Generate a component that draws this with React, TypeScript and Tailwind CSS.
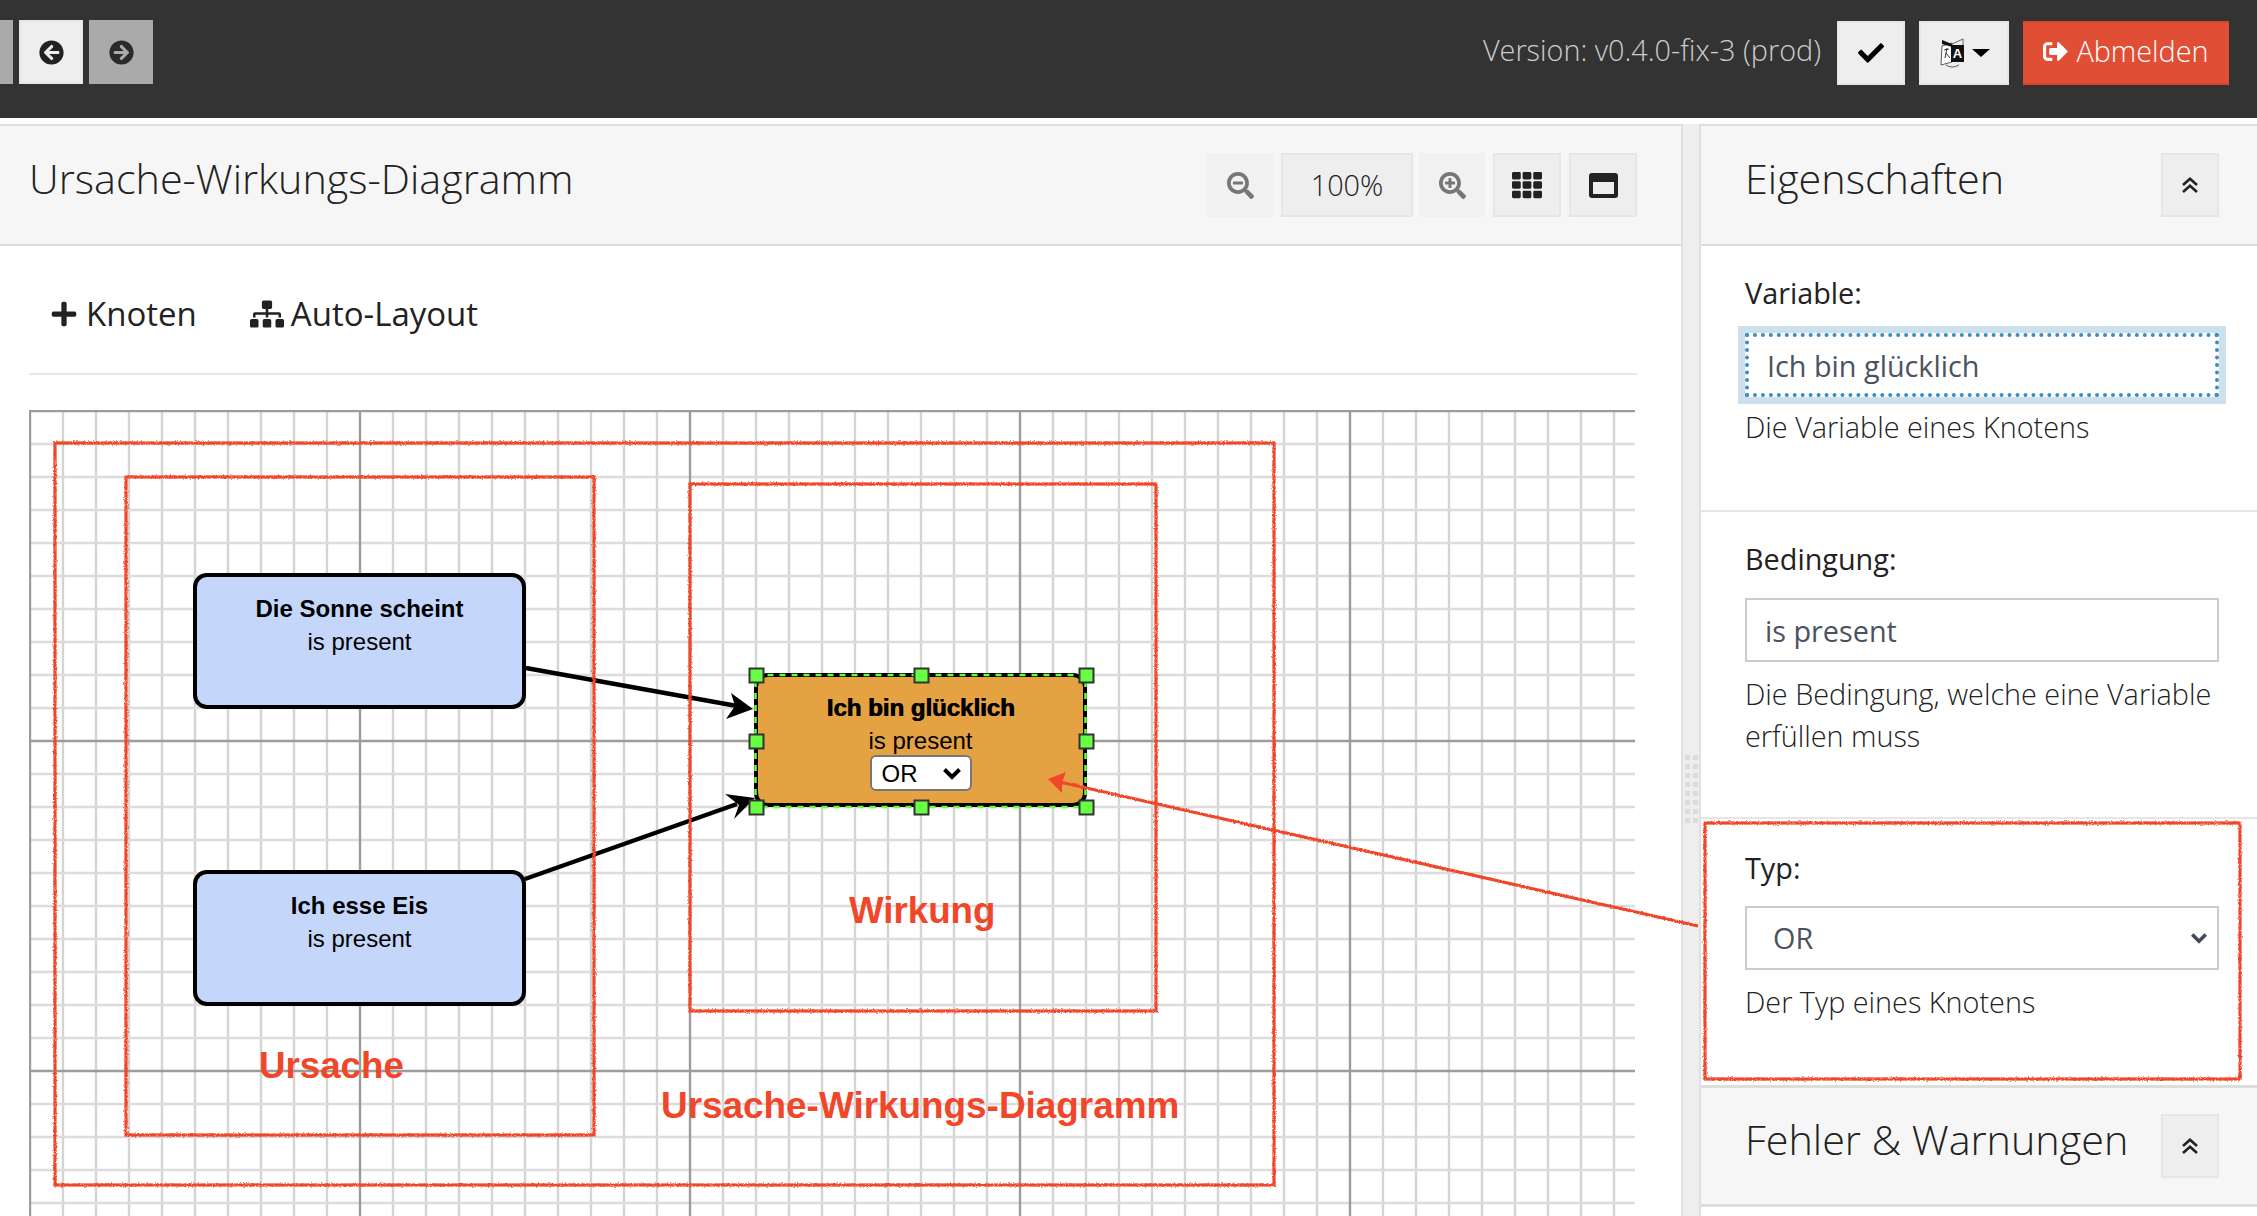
import React from "react";
import {
  FaArrowCircleLeft,
  FaArrowCircleRight,
  FaCheck,
  FaSignOutAlt,
  FaSearchMinus,
  FaSearchPlus,
  FaTh,
  FaPlus,
  FaSitemap,
} from "react-icons/fa";

const minorX = Array.from({ length: 49 }, (_, i) => 1 + i * 33);
const minorY = Array.from({ length: 25 }, (_, i) => 1 + i * 33);
const red = "#f0462a";

function TranslateIcon() {
  return (
    <svg width="27" height="32" viewBox="0 0 27 32" className="block">
      <path d="M3 9 L13 6 L13 25 L2 28 Z" fill="#fff" stroke="#333" strokeWidth="0.8" />
      <path d="M3 3 L13 7 L13 10 L3 7 Z" fill="#111" />
      <path d="M13 7 L24 2 L24 8" fill="none" stroke="#444" strokeWidth="0.8" />
      <path d="M12 8 L25 8 L25 25 L12 25 Z" fill="#111" />
      <text x="18.5" y="21" textAnchor="middle" fill="#fff" fontSize="13" fontWeight="700" fontFamily="Liberation Sans, sans-serif">A</text>
      <path d="M5 13 L10 12 M8 11 L6 21 M7 16 L11 21" stroke="#222" strokeWidth="0.9" fill="none" />
      <path d="M7 28 Q13 32 20 28" stroke="#333" strokeWidth="0.8" fill="none" />
    </svg>
  );
}

function Chevron({ className }: { className: string }) {
  return (
    <svg viewBox="0 0 20 13" className={className}>
      <path d="M2.5 2.5 L10 10 L17.5 2.5" fill="none" stroke="currentColor" strokeWidth="4" />
    </svg>
  );
}

function WindowIcon() {
  return (
    <svg width="29" height="25" viewBox="0 0 29 25">
      <rect width="29" height="25" rx="3" fill="#222" />
      <rect x="4" y="9" width="21" height="12" fill="#eeeeee" />
    </svg>
  );
}

function HelpText({ children }: { children: React.ReactNode }) {
  return <p className="text-[28.8px] leading-[42px] font-light text-[#222]">{children}</p>;
}

function FieldLabel({ children }: { children: React.ReactNode }) {
  return <label className="block text-[28.8px] leading-[40px] text-[#222]">{children}</label>;
}

function CollapseButton() {
  return (
    <button className="flex h-[64px] w-[58px] items-center justify-center border-2 border-[#e6e6e6] bg-[#eeeeee] text-[#222]">
      <svg width="18" height="17" viewBox="0 0 18 17" fill="none" stroke="currentColor" strokeWidth="2.6">
        <path d="M2 8 L9 1.8 L16 8" />
        <path d="M2 15 L9 8.8 L16 15" />
      </svg>
    </button>
  );
}

function Canvas() {
  return (
    <div className="relative ml-[29px] mr-[46px] mt-[35px] flex-1 overflow-hidden bg-white [font-family:'Liberation_Sans',Arial,sans-serif]">
      <svg className="absolute inset-0 h-full w-full">
        {minorX.map((x, i) =>
          i % 10 !== 0 ? <line key={"x" + x} x1={x} x2={x} y1={0} y2={810} stroke="#d4d4d4" strokeWidth="2.4" /> : null
        )}
        {minorY.map((y, i) =>
          i % 10 !== 0 ? <line key={"y" + y} x1={0} x2={1610} y1={y} y2={y} stroke="#dcdcdc" strokeWidth="2.4" /> : null
        )}
        {minorX.map((x, i) =>
          i % 10 === 0 ? <line key={"X" + x} x1={x} x2={x} y1={0} y2={810} stroke="#9c9c9c" strokeWidth="2.4" /> : null
        )}
        {minorY.map((y, i) =>
          i % 10 === 0 ? <line key={"Y" + y} x1={0} x2={1610} y1={y} y2={y} stroke="#9c9c9c" strokeWidth="2.4" /> : null
        )}
      </svg>

      <div className="absolute left-[164px] top-[163px] h-[136px] w-[333px] rounded-[14px] border-[4px] border-black bg-[#c4d7fb] pt-[15px] text-center text-[24px] leading-[33px] text-black">
        <div className="font-bold">Die Sonne scheint</div>
        <div>is present</div>
      </div>

      <div className="absolute left-[164px] top-[460px] h-[136px] w-[333px] rounded-[14px] border-[4px] border-black bg-[#c4d7fb] pt-[15px] text-center text-[24px] leading-[33px] text-black">
        <div className="font-bold">Ich esse Eis</div>
        <div>is present</div>
      </div>

      <div className="absolute left-[725px] top-[263px] flex h-[134px] w-[333px] flex-col items-center rounded-[14px] border-[4px] border-black bg-[#e4a243] pt-[14px] text-center text-[24px] leading-[33px] text-black">
        <div className="font-bold [text-shadow:0.8px_0_0_#000]">Ich bin glücklich</div>
        <div>is present</div>
        <div className="-mt-[2px] flex h-[36px] w-[102px] items-center justify-between rounded-[6px] border-[2px] border-[#777] bg-white pl-[10px] pr-[8px]">
          <span>OR</span>
          <Chevron className="h-[13px] w-[20px]" />
        </div>
      </div>

      <div className="absolute left-[820px] top-[477px] text-[36.7px] font-bold leading-[48px] text-[#f0462a]">Wirkung</div>
      <div className="absolute left-[230px] top-[632px] text-[36.7px] font-bold leading-[48px] text-[#f0462a]">Ursache</div>
      <div className="absolute left-[632px] top-[672px] whitespace-nowrap text-[36.9px] font-bold leading-[48px] text-[#f0462a]">Ursache-Wirkungs-Diagramm</div>

      <svg className="pointer-events-none absolute inset-0 h-full w-full">
        <line x1="497" y1="258" x2="708" y2="296" stroke="#000" strokeWidth="4.5" />
        <path d="M724 299 L702 283 L706 296 L697 309 Z" fill="#000" />
        <line x1="496" y1="469" x2="708" y2="394" stroke="#000" strokeWidth="4.5" />
        <path d="M726 388 L696 384 L710 395 L705 409 Z" fill="#000" />
        <rect x="726.5" y="265" width="330" height="132" fill="none" stroke="#66ff44" strokeWidth="2.5" strokeDasharray="6 6" />
        {[
          [720, 258], [885, 258], [1050, 258],
          [720, 324], [1050, 324],
          [720, 390], [885, 390], [1050, 390],
        ].map(([x, y]) => (
          <rect key={x + "-" + y} x={x + 0.5} y={y + 0.5} width="14" height="14" fill="#66ff44" stroke="#333" strokeWidth="2" />
        ))}
      </svg>
    </div>
  );
}

export default function App() {
  return (
    <div className="relative flex h-[1216px] w-[2257px] flex-col overflow-hidden bg-white text-[#222] [font-family:'Open_Sans',sans-serif]">
      <header className="flex h-[118px] shrink-0 items-start bg-[#333333] pt-[20px]">
        <div className="h-[64px] w-[13px] bg-[#aaaaaa]" />
        <button className="ml-[6px] flex h-[64px] w-[64px] items-center justify-center border-2 border-[#e6e6e6] bg-[#eeeeee] text-[#222]">
          <FaArrowCircleLeft className="h-[25px] w-[25px]" />
        </button>
        <button className="ml-[6px] flex h-[64px] w-[64px] items-center justify-center bg-[#aaaaaa] text-[#2a2a2a]">
          <FaArrowCircleRight className="h-[25px] w-[25px]" />
        </button>
        <div className="ml-auto flex items-center pr-[28px]">
          <span className="mb-[5px] mr-[16px] text-[28.8px] font-light leading-[60px] text-[#cccccc]">Version: v0.4.0-fix-3 (prod)</span>
          <button className="flex h-[64px] w-[68px] items-center justify-center border-2 border-[#e6e6e6] bg-[#eeeeee] text-black">
            <FaCheck className="h-[26px] w-[26px]" />
          </button>
          <button className="ml-[14px] flex h-[64px] w-[90px] items-center justify-center gap-[6px] border-2 border-[#e6e6e6] bg-[#eeeeee]">
            <TranslateIcon />
            <span className="h-0 w-0 border-x-[9px] border-t-[8px] border-x-transparent border-t-black" />
          </button>
          <button className="ml-[14px] flex h-[64px] w-[206px] items-center justify-center gap-[8px] border-y-2 border-y-[#d8432a] bg-[#e04f35] pb-[3px] text-[28.8px] text-white">
            <FaSignOutAlt className="h-[25px] w-[25px]" />
            <span className="font-light">Abmelden</span>
          </button>
        </div>
      </header>

      <div className="flex min-h-0 flex-1 pt-[6px]">
        <main className="flex w-[1681px] shrink-0 flex-col">
          <div className="flex h-[122px] shrink-0 items-center justify-between border-y-2 border-[#dddddd] bg-[#f6f6f6] pl-[29px] pr-[44px]">
            <h1 className="-mt-[14px] text-[41.3px] font-light leading-[60px] text-[#222]">Ursache-Wirkungs-Diagramm</h1>
            <div className="flex items-center">
              <button className="flex h-[64px] w-[66px] items-center justify-center bg-[#f1f1f1] text-[#777]">
                <FaSearchMinus className="h-[27px] w-[27px]" />
              </button>
              <button className="ml-[8px] flex h-[64px] w-[132px] items-center justify-center border-2 border-[#e6e6e6] bg-[#eeeeee] text-[28.8px] font-light text-[#222]">100%</button>
              <button className="ml-[6px] flex h-[64px] w-[66px] items-center justify-center bg-[#f1f1f1] text-[#777]">
                <FaSearchPlus className="h-[27px] w-[27px]" />
              </button>
              <button className="ml-[8px] flex h-[64px] w-[68px] items-center justify-center border-2 border-[#e6e6e6] bg-[#eeeeee] text-[#222]">
                <FaTh className="h-[30px] w-[30px]" />
              </button>
              <button className="ml-[8px] flex h-[64px] w-[68px] items-center justify-center border-2 border-[#e6e6e6] bg-[#eeeeee] text-[#222]">
                <WindowIcon />
              </button>
            </div>
          </div>
          <div className="ml-[29px] mr-[44px] flex h-[129px] shrink-0 items-center border-b-2 border-[#e6e6e6] pt-[8px] text-[33px]">
            <button className="ml-[21px] flex items-center gap-[8px]">
              <FaPlus className="h-[28px] w-[28px]" />
              <span className="font-normal">Knoten</span>
            </button>
            <button className="ml-[53px] flex items-center gap-[7px]">
              <FaSitemap className="h-[30px] w-[34px]" />
              <span className="font-normal">Auto-Layout</span>
            </button>
          </div>
          <Canvas />
        </main>

        <div className="flex w-[20px] shrink-0 flex-col items-center border-x-2 border-[#e0e0e0] bg-[#eeeeee] pt-[631px]">
          <div className="grid grid-cols-2 gap-x-[3px] gap-y-[4px]">
            {Array.from({ length: 16 }, (_, i) => (
              <span key={i} className="h-[5px] w-[5px] bg-[#dcdcdc]" />
            ))}
          </div>
        </div>

        <aside className="flex min-w-0 flex-1 flex-col">
          <div className="flex h-[122px] shrink-0 items-center justify-between border-y-2 border-[#dddddd] bg-[#f6f6f6] pl-[44px] pr-[38px]">
            <h2 className="-mt-[14px] text-[41.3px] font-light leading-[60px] text-[#222]">Eigenschaften</h2>
            <CollapseButton />
          </div>

          <section className="h-[266px] shrink-0 border-b-2 border-[#e6e6e6] pl-[44px] pr-[38px] pt-[27px]">
            <FieldLabel>Variable:</FieldLabel>
            <input
              readOnly
              value="Ich bin glücklich"
              className="mt-[20px] block h-[64px] w-[474px] border-[4px] border-dotted border-[#3a8fc0] bg-white pl-[18px] text-[28.8px] text-[#4a5360] shadow-[0_0_0_7px_#cde0ec] outline-none [font-family:'Open_Sans',sans-serif]"
            />
            <div className="mt-[9px]">
              <HelpText>Die Variable eines Knotens</HelpText>
            </div>
          </section>

          <section className="h-[307px] shrink-0 border-b-2 border-[#e6e6e6] pl-[44px] pr-[38px] pt-[27px]">
            <FieldLabel>Bedingung:</FieldLabel>
            <input
              readOnly
              value="is present"
              className="mt-[19px] block h-[64px] w-[474px] border-[2px] border-[#cccccc] bg-white pl-[18px] text-[28.8px] text-[#4a5360] outline-none [font-family:'Open_Sans',sans-serif]"
            />
            <div className="mt-[11px]">
              <HelpText>Die Bedingung, welche eine Variable erfüllen muss</HelpText>
            </div>
          </section>

          <section className="h-[266px] shrink-0 pl-[44px] pr-[38px] pt-[29px]">
            <FieldLabel>Typ:</FieldLabel>
            <div className="relative mt-[18px] h-[64px] w-[474px]">
              <select className="block h-full w-full appearance-none border-[2px] border-[#cccccc] bg-white pl-[26px] text-[28.8px] text-[#4a5360] outline-none [font-family:'Open_Sans',sans-serif]">
                <option>OR</option>
              </select>
              <Chevron className="pointer-events-none absolute right-[11px] top-[26px] h-[12px] w-[18px] text-[#414a56]" />
            </div>
            <div className="mt-[11px]">
              <HelpText>Der Typ eines Knotens</HelpText>
            </div>
          </section>

          <div className="flex h-[122px] shrink-0 items-center justify-between border-y-[3px] border-[#dddddd] bg-[#f6f6f6] pl-[44px] pr-[38px]">
            <h2 className="-mt-[14px] text-[41.3px] font-light leading-[60px] text-[#222]">Fehler &amp; Warnungen</h2>
            <CollapseButton />
          </div>
        </aside>
      </div>

      <svg className="pointer-events-none absolute inset-0 z-10 h-full w-full">
        <defs>
          <filter id="rough" x="-5%" y="-5%" width="110%" height="110%" filterUnits="objectBoundingBox">
            <feTurbulence type="fractalNoise" baseFrequency="0.6" numOctaves="2" seed="4" />
            <feDisplacementMap in="SourceGraphic" scale="3" />
          </filter>
        </defs>
        <g fill="none" stroke={red} strokeWidth="3.2" filter="url(#rough)">
          <rect x="55" y="443" width="1219" height="742" />
          <rect x="126" y="477" width="468" height="658" />
          <rect x="690" y="484" width="466" height="527" />
          <rect x="1705" y="823" width="535" height="256" />
          <line x1="1698" y1="926" x2="1060" y2="782" />
        </g>
        <path d="M1048 779 L1066 772 L1062 782 L1062 793 Z" fill={red} />
      </svg>
    </div>
  );
}
